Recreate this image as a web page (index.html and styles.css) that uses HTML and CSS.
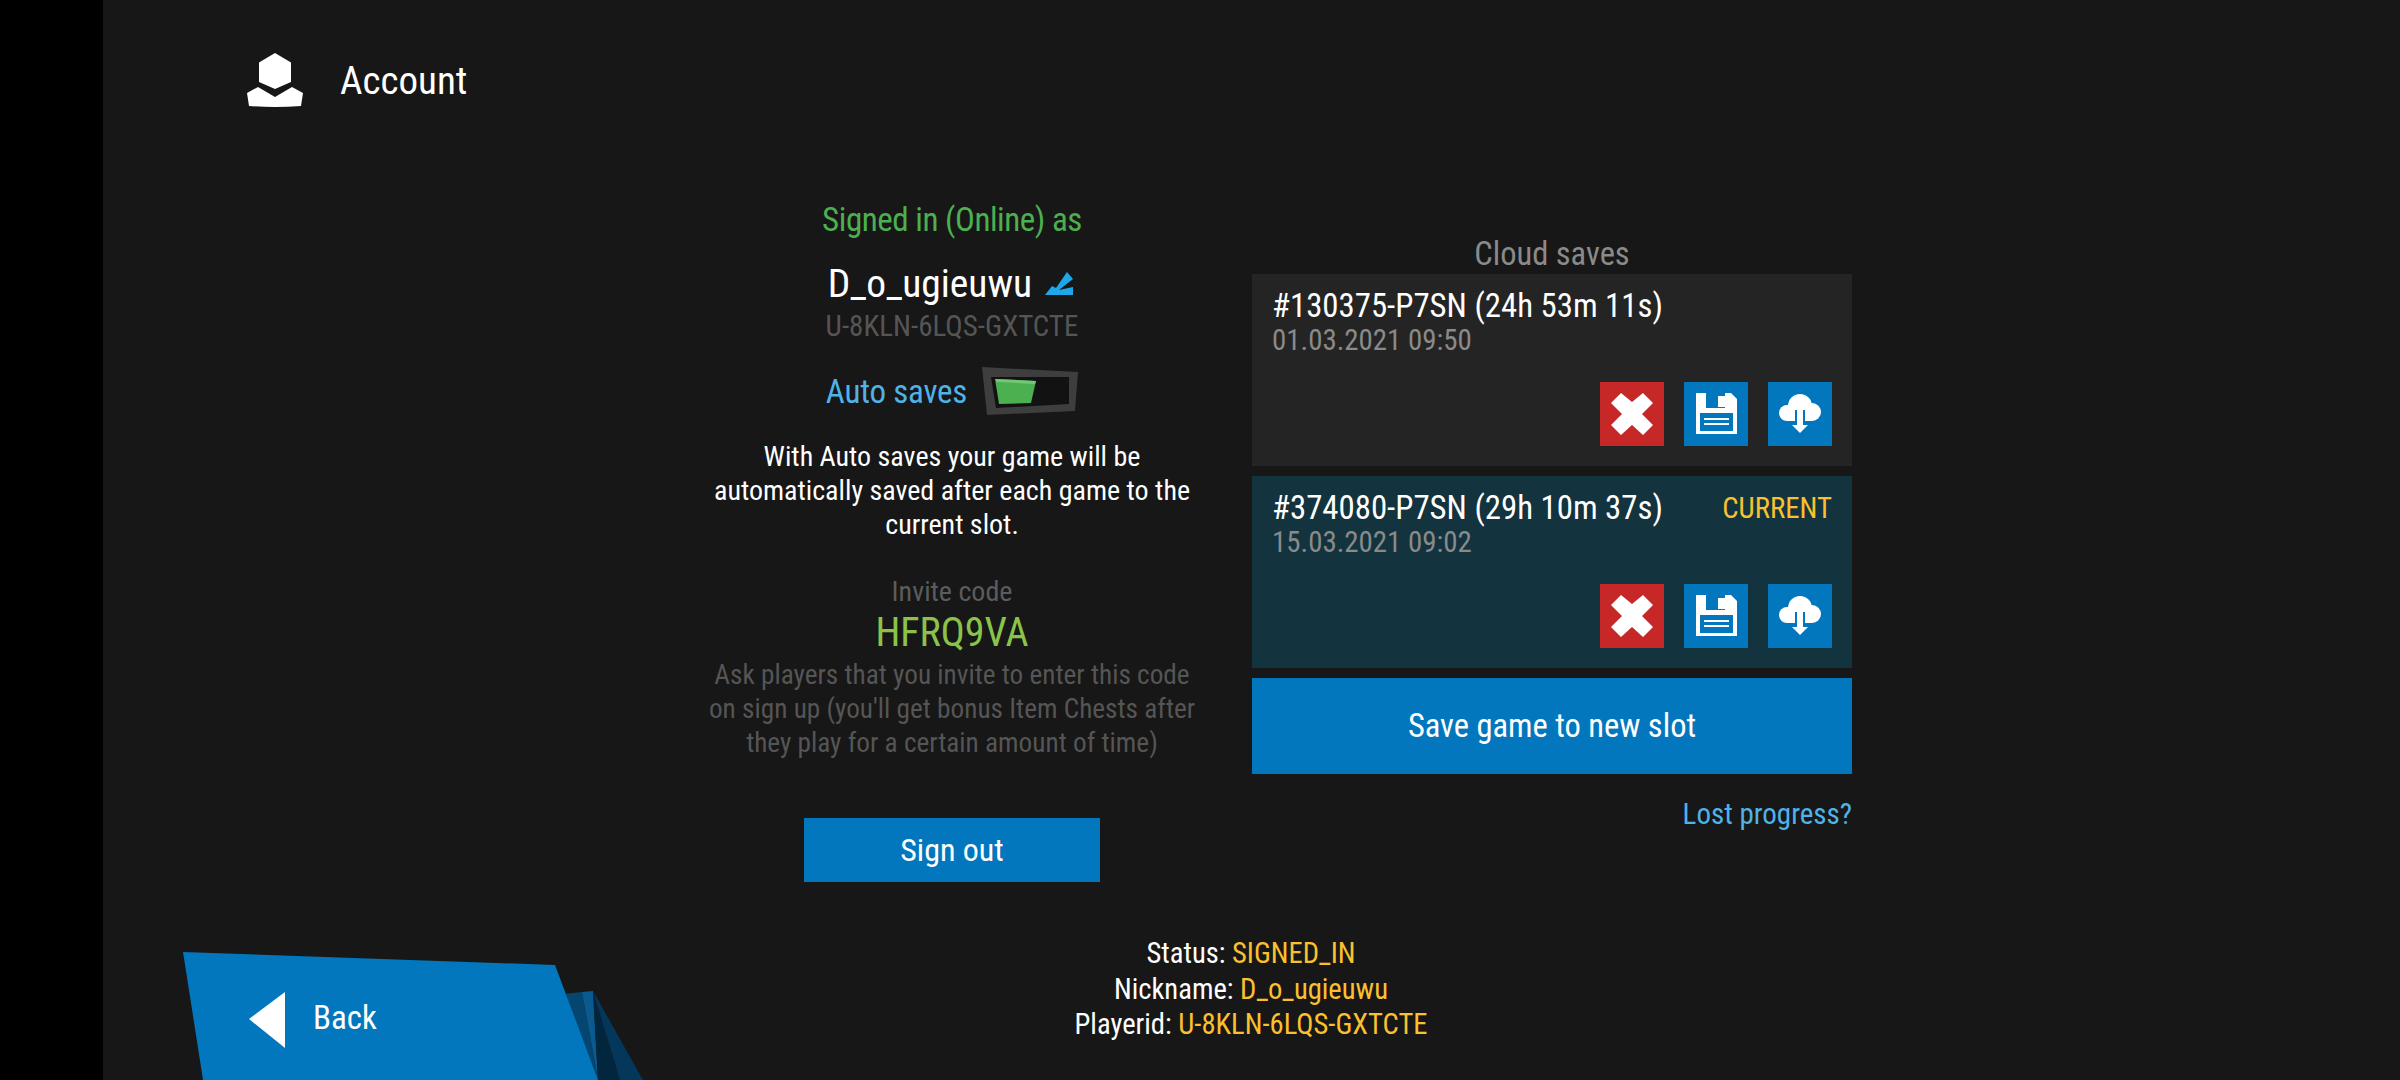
FILE: index.html
```html
<!DOCTYPE html>
<html lang="en">
<head>
    <meta charset="UTF-8">
    <title>Account</title>
    <link rel="stylesheet" href="styles.css">
</head>
<body>
    <div class="side-bar"></div>
    <div class="screen">
        <div class="header">
            <svg class="header-icon" viewBox="0 0 56 56">
                <path fill="#fff" d="M28 0 44 9.5V29L28 36 12 29V9.5Z"/>
                <path fill="#fff" d="M11 34 0 40 2 53Q28 55 54 53L56 40 45 34 28 44Z"/>
            </svg>
            <div class="header-title">Account</div>
        </div>

        <div class="columns">
            <div class="left-col">
                <div class="signed-tag">Signed in (Online) as</div>
                <div class="name-row">
                    <span class="name">D_o_ugieuwu</span>
                    <svg class="edit-icon" viewBox="0 0 28 23">
                        <path fill="#1ea7e8" d="M22 0 11 16 7 14 0 23H28V15L14 18 28 7Z"/>
                    </svg>
                </div>
                <div class="player-id">U-8KLN-6LQS-GXTCTE</div>
                <div class="auto-row">
                    <span class="auto-label">Auto saves</span>
                    <svg class="toggle" viewBox="0 0 96 48">
                        <path fill="#3e3e3e" d="M0 0 96 5 93 44 5 48Z"/>
                        <path fill="#121212" d="M9 10 87 10 87 37 14 41Z"/>
                        <path fill="#4caf50" d="M13 12 54 14 49 36 17 37Z"/>
                        <path fill="#74c777" d="M13 12 54 14 53 17 15 15Z"/>
                    </svg>
                </div>
                <p class="auto-text">With Auto saves your game will be<br>automatically saved after each game to the<br>current slot.</p>
                <div class="invite-label">Invite code</div>
                <div class="invite-code">HFRQ9VA</div>
                <p class="invite-text">Ask players that you invite to enter this code<br>on sign up (you'll get bonus Item Chests after<br>they play for a certain amount of time)</p>
                <button class="sign-out">Sign out</button>
            </div>

            <div class="right-col">
                <div class="cloud-title">Cloud saves</div>
                <div class="save-card">
                    <div class="save-top">
                        <div class="save-title">#130375-P7SN (24h 53m 11s)</div>
                    </div>
                    <div class="save-date">01.03.2021 09:50</div>
                    <div class="save-actions">
                        <button class="icon-btn red"><svg viewBox="0 0 64 64"><use href="#ico-x"/></svg></button>
                        <button class="icon-btn"><svg viewBox="0 0 64 64"><use href="#ico-save"/></svg></button>
                        <button class="icon-btn"><svg viewBox="0 0 64 64"><use href="#ico-cloud"/></svg></button>
                    </div>
                </div>
                <div class="save-card current">
                    <div class="save-top">
                        <div class="save-title">#374080-P7SN (29h 10m 37s)</div>
                        <div class="current-tag">CURRENT</div>
                    </div>
                    <div class="save-date">15.03.2021 09:02</div>
                    <div class="save-actions">
                        <button class="icon-btn red"><svg viewBox="0 0 64 64"><use href="#ico-x"/></svg></button>
                        <button class="icon-btn"><svg viewBox="0 0 64 64"><use href="#ico-save"/></svg></button>
                        <button class="icon-btn"><svg viewBox="0 0 64 64"><use href="#ico-cloud"/></svg></button>
                    </div>
                </div>
                <button class="new-slot">Save game to new slot</button>
                <div class="lost-link">Lost progress?</div>
            </div>
        </div>

        <div class="status">
            <div>Status: <span class="amber">SIGNED_IN</span></div>
            <div>Nickname: <span class="amber">D_o_ugieuwu</span></div>
            <div>Playerid: <span class="amber">U-8KLN-6LQS-GXTCTE</span></div>
        </div>
    </div>

    <div class="back-button">
        <svg class="back-shape" viewBox="0 0 470 128">
            <path fill="#04466f" d="M380 42 399 40 415 128H400Z"/>
            <path fill="#0a5a90" d="M399 40 410 39 415 128Z"/>
            <path fill="#02263d" d="M410 39 437 128H415Z"/>
            <path fill="#04375a" d="M410 39 460 128H437Z"/>
            <path fill="#0277bd" d="M0 0 372 13 415 128H20Z"/>
        </svg>
        <svg class="back-arrow" viewBox="0 0 36 56"><path fill="#fff" d="M36 0V56L0 27Z"/></svg>
        <span class="back-label">Back</span>
    </div>

    <svg class="icon-defs" width="0" height="0">
        <defs>
            <path id="ico-x" fill="#fff" d="M21 11 32 20 43 11 53 21 42 32 53 43 43 53 32 43 21 53 11 43 22 32 11 21Z"/>
            <g id="ico-save">
                <path fill="#fff" d="M12 11H47L53 17V52H12Z"/>
                <path fill="#0277bd" d="M22 11H41V26H22Z"/>
                <path fill="#fff" d="M34 14H41V25H34Z"/>
                <path fill="#0277bd" d="M16 31H49V49H16Z"/>
                <path fill="#fff" d="M20 36H45V38H20ZM20 41H45V43H20Z"/>
            </g>
            <g id="ico-cloud">
                <circle fill="#fff" cx="32" cy="24" r="12"/>
                <circle fill="#fff" cx="19" cy="31" r="8"/>
                <circle fill="#fff" cx="44" cy="30" r="9"/>
                <path fill="#fff" d="M19 25H44V39H19Z"/>
                <path fill="#0277bd" d="M27 28H37V44H27Z"/>
                <path fill="#fff" d="M29 28H35V44H29Z"/>
                <path fill="#fff" d="M24 43H40L32 51Z"/>
            </g>
        </defs>
    </svg>
</body>
</html>
```
FILE: styles.css
```css
* {
    box-sizing: border-box;
}

body {
    margin: 0;
    width: 2400px;
    height: 1080px;
    overflow: hidden;
    display: flex;
    position: relative;
    background: #171717;
    color: #fff;
    font-family: Roboto, "Liberation Sans", sans-serif;
    font-stretch: 75%;
    font-size: 30px;
}

button {
    font-family: inherit;
    font-stretch: inherit;
    border: none;
    color: #fff;
    padding: 0;
}

.side-bar {
    width: 103px;
    background: #000;
    flex-shrink: 0;
}

.screen {
    flex: 1;
    display: flex;
    flex-direction: column;
}

.header {
    display: flex;
    align-items: center;
    gap: 37px;
    padding: 53px 0 0 144px;
    height: 109px;
}

.header-icon {
    width: 56px;
    height: 56px;
}

.header-title {
    font-size: 39px;
}

.columns {
    display: flex;
    gap: 50px;
    padding-left: 599px;
    height: 780px;
}

.left-col {
    width: 500px;
    display: flex;
    flex-direction: column;
    align-items: center;
    padding-top: 88px;
    text-align: center;
}

.signed-tag {
    color: #4caf50;
    font-size: 33px;
    letter-spacing: -0.45px;
    line-height: 46px;
}

.name-row {
    display: flex;
    align-items: center;
    gap: 13px;
    margin-top: 18px;
    padding-right: 3px;
    height: 44px;
}

.name {
    font-size: 39.5px;
}

.edit-icon {
    width: 28px;
    height: 23px;
}

.player-id {
    color: #555;
    font-size: 29px;
    margin-top: 3px;
    line-height: 36px;
}

.auto-row {
    display: flex;
    align-items: center;
    gap: 15px;
    margin-top: 23px;
    height: 48px;
}

.auto-label {
    color: #4fb3e8;
    font-size: 33px;
    letter-spacing: -0.2px;
}

.toggle {
    width: 96px;
    height: 48px;
}

.auto-text,
.invite-text {
    margin: 0;
    line-height: 34px;
    font-size: 28px;
    white-space: nowrap;
}

.auto-text {
    margin-top: 25px;
}

.invite-label {
    color: #5c5c5c;
    font-size: 28px;
    margin-top: 31.5px;
    line-height: 36px;
}

.invite-code {
    color: #8bc34a;
    font-size: 40px;
    margin-top: -1px;
    line-height: 48px;
}

.invite-text {
    color: #555;
    font-size: 27.25px;
    margin-top: 1px;
}

.sign-out {
    width: 296px;
    height: 64px;
    background: #0277bd;
    font-size: 32px;
    margin-top: 58px;
}

.right-col {
    width: 600px;
    display: flex;
    flex-direction: column;
    padding-top: 126px;
}

.cloud-title {
    color: #8a8a8a;
    font-size: 32.5px;
    text-align: center;
    line-height: 39px;
}

.save-card {
    height: 192px;
    background: #242424;
    padding: 12px 20px 0;
    margin-bottom: 10px;
    display: flex;
    flex-direction: column;
}

.save-card.current {
    background: #13333f;
}

.save-top {
    display: flex;
    justify-content: space-between;
    align-items: center;
}

.save-title {
    font-size: 32.8px;
    line-height: 40px;
}

.current-tag {
    color: #fbc02d;
    font-size: 28.8px;
}

.save-date {
    color: #8a8a8a;
    font-size: 28.9px;
    line-height: 28px;
}

.save-actions {
    display: flex;
    justify-content: flex-end;
    gap: 20px;
    margin-top: auto;
    padding: 0 0 20px;
}

.icon-btn {
    width: 64px;
    height: 64px;
    background: #0277bd;
}

.icon-btn.red {
    background: #c62828;
}

.icon-btn svg {
    display: block;
    width: 64px;
    height: 64px;
}

.new-slot {
    height: 96px;
    background: #0277bd;
    font-size: 32.5px;
}

.lost-link {
    color: #4fb3e8;
    font-size: 29px;
    text-align: right;
    margin-top: 23px;
}

.status {
    text-align: center;
    padding-left: 599px;
    width: 1697px;
    margin-top: 47px;
    line-height: 35.5px;
    font-size: 28.6px;
}

.amber {
    color: #fbc02d;
}

.back-button {
    position: absolute;
    left: 183px;
    bottom: 0;
    width: 470px;
    height: 128px;
}

.back-shape {
    position: absolute;
    left: 0;
    top: 0;
    width: 470px;
    height: 128px;
}

.back-arrow {
    position: absolute;
    left: 66px;
    top: 40px;
    width: 36px;
    height: 56px;
}

.back-label {
    position: absolute;
    left: 130px;
    top: 46px;
    font-size: 33px;
}

.icon-defs {
    position: absolute;
}
```
